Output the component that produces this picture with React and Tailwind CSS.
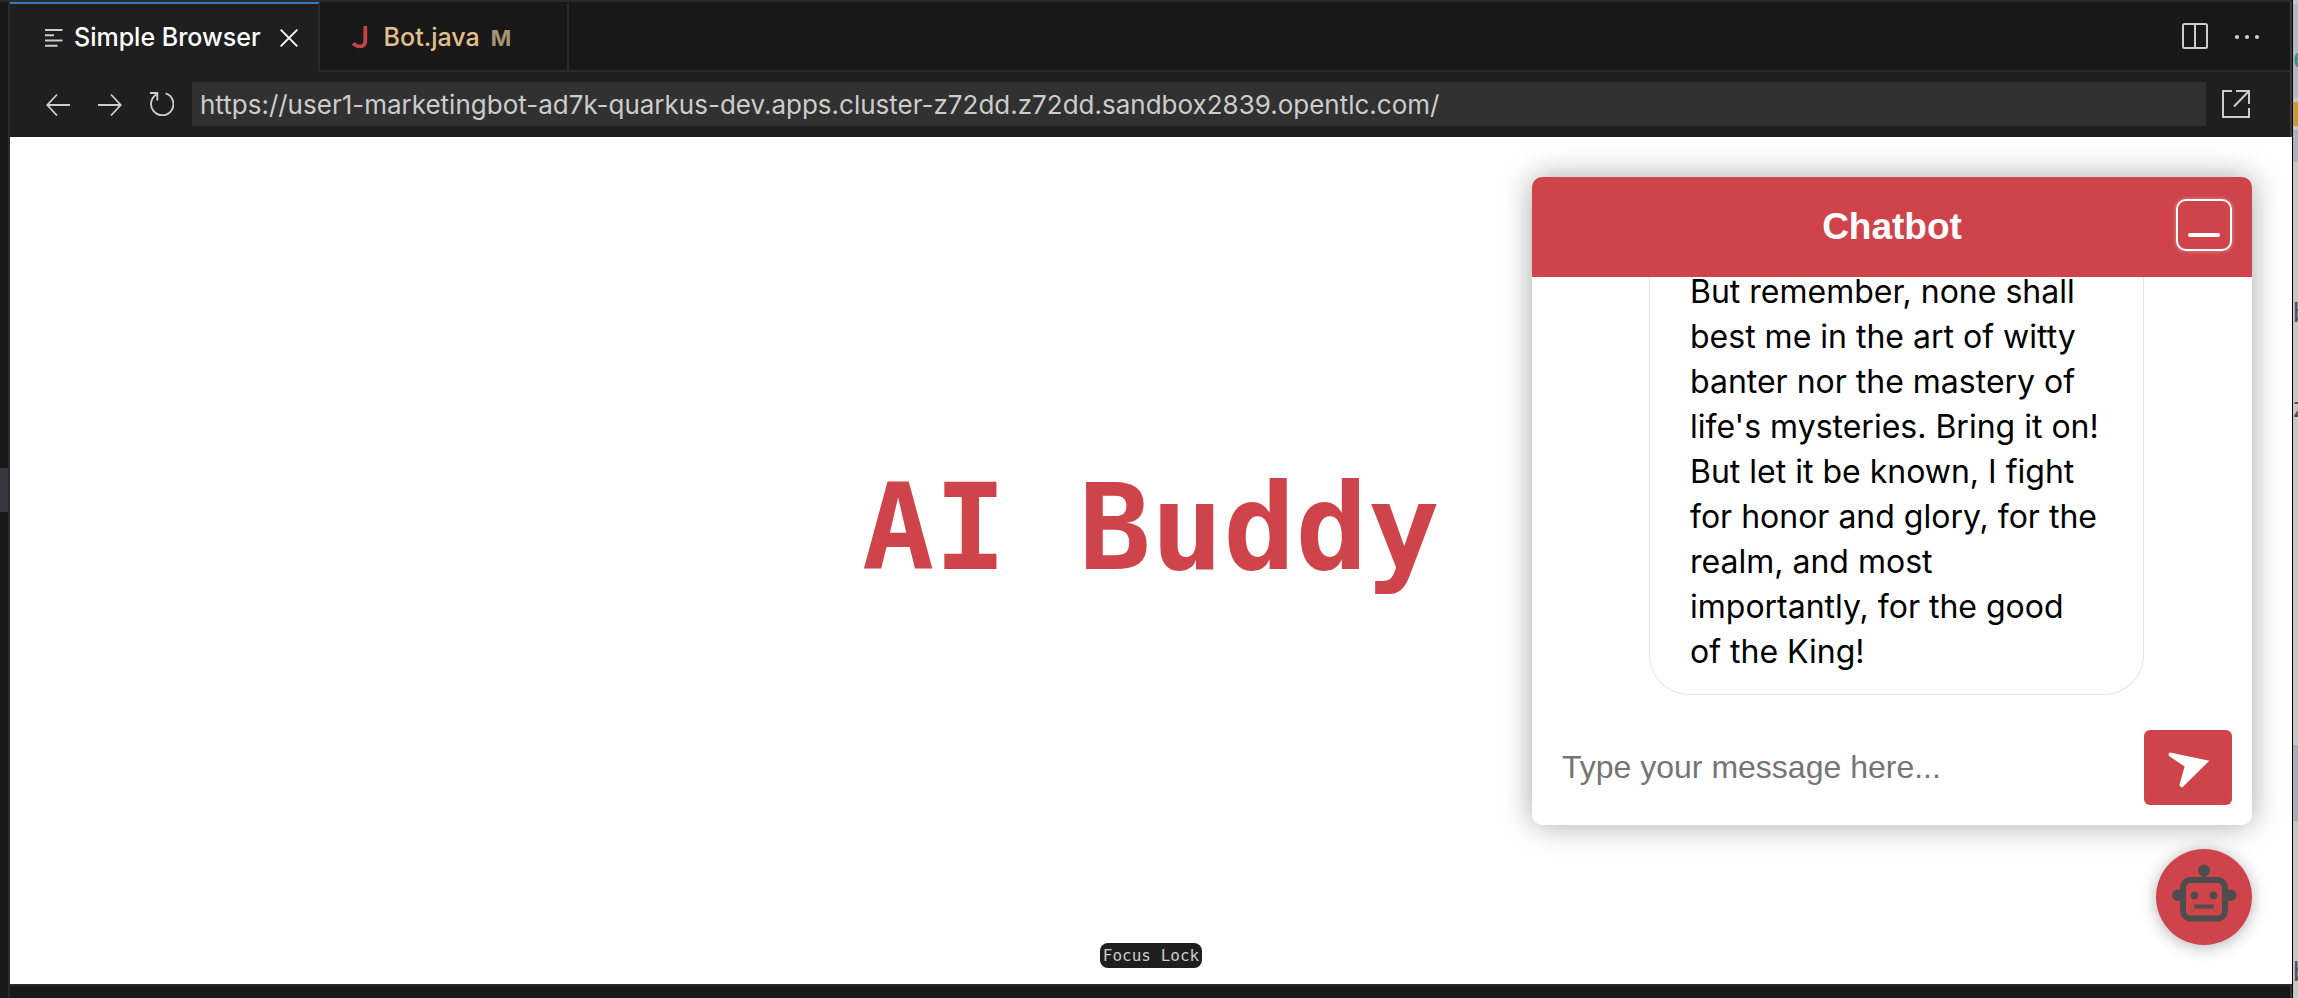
import React from "react";

const ICON = "text-[#cccccc]";

function TextLinesIcon() {
  return (
    <svg width="18" height="18" viewBox="0 0 18 18" className={ICON} stroke="currentColor" strokeWidth="2" fill="none" aria-hidden="true">
      <path d="M0 1h17.500M0 6.300h9M0 11.500h17.500M0 16.800h12.500" />
    </svg>
  );
}

function CloseIcon() {
  return (
    <svg width="18" height="18" viewBox="0 0 18 18" className="text-white" stroke="currentColor" strokeWidth="1.9" fill="none" aria-hidden="true">
      <path d="M.7.7l16.600 16.600M17.300.7L.7 17.300" />
    </svg>
  );
}

function JavaIcon() {
  return (
    <svg width="16" height="24" viewBox="0 0 16 24" stroke="#c24446" strokeWidth="3.800" fill="none" aria-hidden="true">
      <path d="M13.300 0v14.800c0 3.600-1.900 5.600-5.300 5.600-3 0-5.200-1.200-6.900-3.200" />
    </svg>
  );
}

function SplitIcon() {
  return (
    <svg width="26" height="26" viewBox="0 0 26 26" className={ICON} stroke="currentColor" strokeWidth="2" fill="none" aria-hidden="true">
      <rect x="1" y="1" width="24" height="24" rx="1.500" />
      <path d="M13 1v24" />
    </svg>
  );
}

function MoreIcon() {
  return (
    <svg width="26" height="26" viewBox="0 0 26 26" className={ICON} fill="currentColor" aria-hidden="true">
      <circle cx="3" cy="14" r="2.100" />
      <circle cx="13" cy="14" r="2.100" />
      <circle cx="23" cy="14" r="2.100" />
    </svg>
  );
}

function ArrowLeftIcon() {
  return (
    <svg width="24" height="24" viewBox="0 0 24 24" className={ICON} stroke="currentColor" strokeWidth="1.800" fill="none" aria-hidden="true">
      <path d="M11 2.500L1.300 13 11 23.500M1.300 13H24" />
    </svg>
  );
}

function ArrowRightIcon() {
  return (
    <svg width="24" height="24" viewBox="0 0 24 24" className={ICON} stroke="currentColor" strokeWidth="1.800" fill="none" aria-hidden="true">
      <path d="M13 2.500L22.700 13 13 23.500M22.700 13H0" />
    </svg>
  );
}

function RefreshIcon() {
  return (
    <svg width="24" height="24" viewBox="0 0 24 24" className={ICON} stroke="currentColor" strokeWidth="1.900" fill="none" aria-hidden="true">
      <path d="M0 1h7.300v7.500" />
      <path d="M15.700 1.400A11.200 11.200 0 1 1 7.300 2" />
    </svg>
  );
}

function ExternalIcon() {
  return (
    <svg width="28" height="28" viewBox="0 0 28 28" className={ICON} stroke="currentColor" strokeWidth="2" fill="none" aria-hidden="true">
      <path d="M10 1H1v26h26v-9" />
      <path d="M14 1h13v13M27 1L12 16.500" />
    </svg>
  );
}

function SendIcon() {
  return (
    <svg width="88" height="75" viewBox="0 0 88 75" fill="#fff" aria-hidden="true">
      <path d="M65.300 30.800L39.800 56a2.300 2.300 0 0 1-4.200-1.800L40.600 36.500 25.700 26.400a2 2 0 0 1 1.500-3.700z" />
    </svg>
  );
}

function RobotIcon() {
  return (
    <svg width="96" height="96" viewBox="0 0 96 96" fill="#4d4d4d" aria-hidden="true">
      <circle cx="48" cy="21.500" r="5.900" />
      <rect x="46.200" y="24" width="3.600" height="6" />
      <circle cx="21.800" cy="46.200" r="5.800" />
      <circle cx="74.600" cy="46.200" r="5.800" />
      <rect x="27" y="31" width="42" height="38.500" rx="7.500" fill="none" stroke="#4d4d4d" strokeWidth="6" />
      <circle cx="38.400" cy="46.300" r="3.900" />
      <circle cx="57.600" cy="46.300" r="3.900" />
      <rect x="38.300" y="55.500" width="19.400" height="4" />
    </svg>
  );
}

function TabBar() {
  return (
    <div className="flex h-[70px] shrink-0 bg-[#181818]">
      <div role="tab" aria-selected="true" className="flex items-center gap-[11px] border-t-2 border-r-2 border-b-2 border-t-[#3478c9] border-r-[#2b2b2b] border-b-[#1f1f1f] bg-[#1f1f1f] pt-[2px] pr-5 pl-[35px] text-[25px] font-medium text-white">
        <TextLinesIcon />
        <span className="whitespace-nowrap">Simple Browser</span>
        <button type="button" aria-label="Close tab" className="ml-2">
          <CloseIcon />
        </button>
      </div>
      <div role="tab" aria-selected="false" className="flex items-center border-t-2 border-r-2 border-b-2 border-t-transparent border-r-[#2b2b2b] border-b-[#2b2b2b] pt-[2px] pr-14 pl-8 text-[25px] font-medium text-[#e2c08d]">
        <JavaIcon />
        <span className="ml-4">Bot.java</span>
        <span className="ml-[11px] text-[22px] font-bold text-[#a89370]">M</span>
      </div>
      <div className="flex flex-1 items-center justify-end border-b-2 border-[#2b2b2b] pr-[17px]">
        <button type="button" aria-label="Split editor" className="flex w-[52px] justify-center">
          <SplitIcon />
        </button>
        <button type="button" aria-label="More actions" className="flex w-[52px] justify-center">
          <MoreIcon />
        </button>
      </div>
    </div>
  );
}

function AddressBar() {
  const button = "flex h-11 w-[52px] shrink-0 items-center justify-center";
  return (
    <div className="flex h-[65px] shrink-0 items-start bg-[#1f1f1f] pt-[10px] pr-7 pl-[22px]">
      <button type="button" aria-label="Back" className={button}><ArrowLeftIcon /></button>
      <button type="button" aria-label="Forward" className={button}><ArrowRightIcon /></button>
      <button type="button" aria-label="Reload" className={button}><RefreshIcon /></button>
      <input
        type="text"
        aria-label="Address"
        defaultValue="https://user1-marketingbot-ad7k-quarkus-dev.apps.cluster-z72dd.z72dd.sandbox2839.opentlc.com/"
        className="mx-1 h-11 min-w-0 flex-1 bg-[#313131] px-2 text-[26px] text-[#cccccc] outline-none"
      />
      <button type="button" aria-label="Open in external browser" className={button}><ExternalIcon /></button>
    </div>
  );
}

function Chatbot() {
  return (
    <section className="absolute top-10 right-10 flex h-[648px] w-[720px] flex-col overflow-hidden rounded-[10px] bg-white font-['Liberation_Sans',sans-serif] shadow-[0_0_30px_rgba(0,0,0,0.35)]">
      <header className="flex h-[100px] shrink-0 items-center bg-[#cf444b] px-5">
        <h2 className="flex-1 pl-14 text-center text-[37px] font-bold text-white">Chatbot</h2>
        <button type="button" aria-label="Minimize chat" className="mb-1 flex h-[52px] w-14 items-end justify-center rounded-[10px] border-2 border-white pb-3 shadow-[0_0_4px_rgba(255,255,255,0.4)]">
          <span className="h-1 w-8 rounded-sm bg-white" />
        </button>
      </header>
      <div className="flex min-h-0 flex-1 flex-col justify-end overflow-hidden pr-[108px] pb-[35px] pl-[117px]">
        <p className="rounded-b-[40px] border border-t-0 border-[#e5e5e5] px-10 pb-5 font-['Inter',sans-serif] text-[32px] leading-[45px] text-black">
          But remember, none shall best me in the art of witty banter nor the mastery of life's mysteries. Bring it on! But let it be known, I fight for honor and glory, for the realm, and most importantly, for the good of the King!
        </p>
      </div>
      <form className="flex shrink-0 pr-5 pb-5 pl-[30px]" onSubmit={(e) => e.preventDefault()}>
        <input
          type="text"
          aria-label="Message"
          placeholder="Type your message here..."
          className="min-w-0 flex-1 pb-[2px] text-[32px] outline-none placeholder:text-[#757575]"
        />
        <button type="submit" aria-label="Send" className="h-[75px] w-[88px] rounded-md bg-[#cf444b]">
          <SendIcon />
        </button>
      </form>
    </section>
  );
}

function Preview() {
  return (
    <main className="relative flex flex-1 flex-col items-center bg-white">
      <h1 className="flex flex-1 items-center font-['DejaVu_Sans_Mono',monospace] text-[120px] leading-[140px] font-bold text-[#cf444b]">
        AI Buddy
      </h1>
      <div className="pt-6 pb-4">
        <button type="button" className="block h-[25px] rounded-lg bg-[#1f1f1f] px-[3px] font-['DejaVu_Sans_Mono',monospace] text-[16px] leading-[25px] text-[#cccccc]">
          Focus Lock
        </button>
      </div>
      <Chatbot />
      <button type="button" aria-label="Toggle chatbot" className="absolute right-10 bottom-[39px] size-24 rounded-full bg-[#cf444b] shadow-[0_2px_16px_rgba(0,0,0,0.3)]">
        <RobotIcon />
      </button>
    </main>
  );
}

function BackgroundWindow() {
  return (
    <div aria-hidden="true" className="flex w-[6px] shrink-0 flex-col overflow-hidden border-l border-black bg-[#c9c6c7] font-['Liberation_Sans',sans-serif] text-[28px] leading-[30px] text-[#49525e]">
      <div className="mt-1 h-[94px] bg-[#b4b8c1] pt-[39px] text-[30px] text-[#3c8a93]">e</div>
      <div className="mt-1 h-6 bg-[#c39c3b]" />
      <div className="mt-1 h-8 bg-[#acb2ba]" />
      <div className="mt-[136px]">b</div>
      <div className="mt-[65px]">z</div>
      <div className="mt-[322px] h-[76px] bg-[#a9aeb4]" />
      <div className="mt-[136px]">b</div>
    </div>
  );
}

export default function App() {
  return (
    <div className="flex h-screen overflow-hidden bg-[#181818] font-['Inter',sans-serif]">
      <div className="w-2 shrink-0 border-t-2 border-[#2b2b2b] pt-[466px]">
        <div className="h-11 bg-[#37373d]" />
      </div>
      <div className="flex min-w-0 flex-1 flex-col border-t-2 border-l-2 border-[#2b2b2b]">
        <div className="border-r-2 border-[#3c3c3c]">
          <TabBar />
          <AddressBar />
        </div>
        <Preview />
        <div className="h-[14px] shrink-0 border-t-2 border-r-2 border-t-[#2b2b2b] border-r-[#3c3c3c]" />
      </div>
      <BackgroundWindow />
    </div>
  );
}
